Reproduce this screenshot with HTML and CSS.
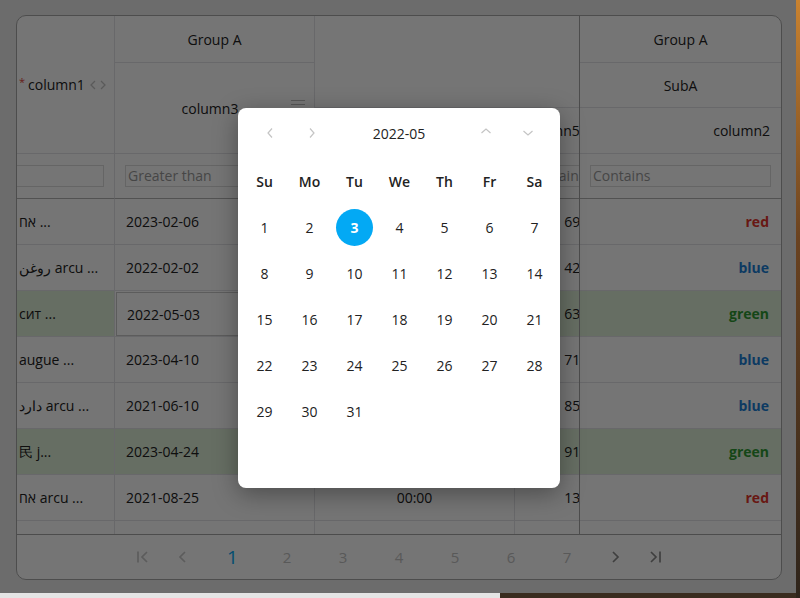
FILE: index.html
```html
<!DOCTYPE html>
<html lang="en">
<head>
<meta charset="utf-8">
<title>Grid with date picker</title>
<link rel="stylesheet" href="styles.css">
</head>
<body>
<div class="screen">
  <div class="grid">
    <div class="grid-body">
      <div class="scroller">
        <div class="sc-inner">
          <div class="head">
            <div class="c h h-col1"><span class="req">*</span>column1
              <svg class="sort" width="18" height="10" viewBox="0 0 18 10"><path d="M6 1 L2 5 L6 9 M12 1 L16 5 L12 9" fill="none" stroke="#c4c4c4" stroke-width="1.3"/></svg>
            </div>
            <div class="c h h-grp">Group A</div>
            <div class="c h h-empty"></div>
            <div class="c h h-col3"><span></span><span>column3</span>
              <svg class="menu" width="14" height="12" viewBox="0 0 14 12"><path d="M0 1.5 H14 M0 5.5 H14 M0 9.5 H14" stroke="#bdbdbd" stroke-width="1.2"/></svg>
            </div>
            <div class="c h h-col4">column4</div>
            <div class="c h h-col5">column5</div>
            <div class="c f f-right"><span class="inp"></span></div>
            <div class="c f"><span class="inp">Greater than</span></div>
            <div class="c f"><span class="inp">Equals</span></div>
            <div class="c f"><span class="inp">Contains</span></div>
          </div>

          <div class="row"><div class="c t">אח ...</div><div class="c d">2023-02-06</div><div class="c m">08:15</div><div class="c n">69143.27</div></div>
          <div class="row"><div class="c t">روغن arcu ...</div><div class="c d">2022-02-02</div><div class="c m">12:40</div><div class="c n">42718.05</div></div>
          <div class="row ok"><div class="c t">сит ...</div><div class="c d edit"><span class="ed">2022-05-03</span></div><div class="c m">17:05</div><div class="c n">63209.84</div></div>
          <div class="row"><div class="c t">augue ...</div><div class="c d">2023-04-10</div><div class="c m">09:30</div><div class="c n">71158.36</div></div>
          <div class="row"><div class="c t">دارد arcu ...</div><div class="c d">2021-06-10</div><div class="c m">14:55</div><div class="c n">85970.12</div></div>
          <div class="row ok"><div class="c t">民 j...</div><div class="c d">2023-04-24</div><div class="c m">21:20</div><div class="c n">91436.58</div></div>
          <div class="row"><div class="c t">אח arcu ...</div><div class="c d">2021-08-25</div><div class="c m">00:00</div><div class="c n">13702.66</div></div>
          <div class="row"><div class="c t">ipsum ...</div><div class="c d">2022-11-17</div><div class="c m">06:45</div><div class="c n">25081.93</div></div>
        </div>
      </div>
      <div class="frozen">
        <div class="head-f">
          <div class="c h">Group A</div>
          <div class="c h">SubA</div>
          <div class="c h h-right">column2</div>
          <div class="c f"><span class="inp wide">Contains</span></div>
        </div>
        <div class="row-f"><div class="c v red">red</div></div>
        <div class="row-f"><div class="c v blue">blue</div></div>
        <div class="row-f ok"><div class="c v green">green</div></div>
        <div class="row-f"><div class="c v blue">blue</div></div>
        <div class="row-f"><div class="c v blue">blue</div></div>
        <div class="row-f ok"><div class="c v green">green</div></div>
        <div class="row-f"><div class="c v red">red</div></div>
        <div class="row-f"><div class="c v blue">blue</div></div>
      </div>
    </div>
    <div class="pager">
      <span class="pg arrow"><svg width="16" height="14" viewBox="0 0 16 14"><path d="M3 1.5 V12.5 M12 2 L7 7 L12 12" fill="none" stroke="#c9c9c9" stroke-width="1.7"/></svg></span>
      <span class="pg arrow"><svg width="16" height="14" viewBox="0 0 16 14"><path d="M10 2 L5 7 L10 12" fill="none" stroke="#c9c9c9" stroke-width="1.7"/></svg></span>
      <span class="pg num active">1</span>
      <span class="pg num">2</span>
      <span class="pg num">3</span>
      <span class="pg num">4</span>
      <span class="pg num">5</span>
      <span class="pg num">6</span>
      <span class="pg num">7</span>
      <span class="pg arrow"><svg width="16" height="14" viewBox="0 0 16 14"><path d="M6 2 L11 7 L6 12" fill="none" stroke="#8a8a8a" stroke-width="1.7"/></svg></span>
      <span class="pg arrow"><svg width="16" height="14" viewBox="0 0 16 14"><path d="M4 2 L9 7 L4 12 M13 1.5 V12.5" fill="none" stroke="#8a8a8a" stroke-width="1.7"/></svg></span>
    </div>
  </div>

  <div class="backdrop"></div>

  <div class="picker">
    <div class="p-head">
      <span class="p-btn"><svg width="10" height="12" viewBox="0 0 10 12"><path d="M7 1.5 L3 6 L7 10.5" fill="none" stroke="#c4c4c4" stroke-width="1.2"/></svg></span>
      <span class="p-btn"><svg width="10" height="12" viewBox="0 0 10 12"><path d="M3 1.5 L7 6 L3 10.5" fill="none" stroke="#c4c4c4" stroke-width="1.2"/></svg></span>
      <span class="p-title">2022-05</span>
      <span class="p-btn up"><svg width="12" height="10" viewBox="0 0 12 10"><path d="M1.5 7 L6 3 L10.5 7" fill="none" stroke="#c4c4c4" stroke-width="1.2"/></svg></span>
      <span class="p-btn"><svg width="12" height="10" viewBox="0 0 12 10"><path d="M1.5 3 L6 7 L10.5 3" fill="none" stroke="#c4c4c4" stroke-width="1.2"/></svg></span>
    </div>
    <div class="p-grid">
      <span class="wd">Su</span><span class="wd">Mo</span><span class="wd">Tu</span><span class="wd">We</span><span class="wd">Th</span><span class="wd">Fr</span><span class="wd">Sa</span>
      <span class="day">1</span><span class="day">2</span><span class="day"><b class="sel">3</b></span><span class="day">4</span><span class="day">5</span><span class="day">6</span><span class="day">7</span>
      <span class="day">8</span><span class="day">9</span><span class="day">10</span><span class="day">11</span><span class="day">12</span><span class="day">13</span><span class="day">14</span>
      <span class="day">15</span><span class="day">16</span><span class="day">17</span><span class="day">18</span><span class="day">19</span><span class="day">20</span><span class="day">21</span>
      <span class="day">22</span><span class="day">23</span><span class="day">24</span><span class="day">25</span><span class="day">26</span><span class="day">27</span><span class="day">28</span>
      <span class="day">29</span><span class="day">30</span><span class="day">31</span><span class="day"></span><span class="day"></span><span class="day"></span><span class="day"></span>
      <span class="day"></span><span class="day"></span><span class="day"></span><span class="day"></span><span class="day"></span><span class="day"></span><span class="day"></span>
    </div>
  </div>
</div>
</body>
</html>
```

FILE: styles.css
```css
html {
  background:
    linear-gradient(180deg, #c9822f 0%, #6a4220 40%, #2e241b 100%) right top / 4px 100% no-repeat,
    linear-gradient(90deg, #e4e4e4 0 500px, #3a2c1f 500px) left bottom / 100% 100% no-repeat;
  height: 100%;
}

body {
  margin: 0;
  font-family: "Open Sans", "Liberation Sans", sans-serif;
}

.screen {
  position: relative;
  width: 796px;
  height: 593px;
  box-sizing: border-box;
  padding: 15px 14px 13px 16px;
  background: #ececec;
}

.grid {
  height: 100%;
  box-sizing: border-box;
  display: flex;
  flex-direction: column;
  border: 1px solid #a9a9a9;
  border-radius: 10px;
  overflow: hidden;
  background: #fff;
  color: #212121;
  font-size: 14px;
}

.grid-body {
  flex: 1;
  min-height: 0;
  display: flex;
  overflow: hidden;
}

.scroller {
  flex: 1;
  min-width: 0;
  overflow: hidden;
}

.sc-inner {
  width: 650px;
  margin-left: -32px;
}

.head,
.row {
  display: grid;
  grid-template-columns: 130px 200px 200px 120px;
}

.head {
  grid-template-rows: 47px 45px 46px 45px;
}

.row { height: 46px; }

.c {
  box-sizing: border-box;
  display: flex;
  align-items: center;
  min-width: 0;
  overflow: hidden;
  white-space: nowrap;
  border-right: 1px solid #e2e2e6;
  border-bottom: 1px solid #e2e2e6;
}

.h {
  justify-content: center;
  font-weight: 500;
  color: #222;
}

.h-col1 {
  grid-row: 1 / 4;
  grid-column: 1;
  justify-content: flex-start;
  padding-left: 34px;
}

.req {
  color: #e0463c;
  font-size: 11px;
  margin-right: 3px;
  align-self: center;
  transform: translateY(-3px);
}

.sort { margin-left: 4px; }

.h-grp { grid-row: 1; grid-column: 2; }
.h-empty { grid-row: 1 / 3; grid-column: 3 / 5; }

.h-col3 {
  grid-row: 2 / 4;
  grid-column: 2;
  display: grid;
  grid-template-columns: 1fr auto 1fr;
  align-items: center;
  padding: 0 9px 0 0;
}

.h-col3 .menu { justify-self: end; margin-top: -6px; }

.h-col4 { grid-row: 3; grid-column: 3; }

.h-col5 {
  grid-row: 3;
  grid-column: 4;
  justify-content: flex-start;
  padding-left: 8px;
  font-weight: 400;
}

.f {
  border-bottom: 1px solid #b4b4b4;
  padding: 0 10px;
}

.f-right { justify-content: flex-end; }

.inp {
  box-sizing: border-box;
  display: block;
  height: 22px;
  width: 100%;
  border: 1px solid #dcdcdc;
  padding: 0 2px;
  line-height: 20px;
  color: #9a9a9a;
  font-size: 14px;
}

.f-right .inp { width: 104px; flex: none; }

.t { padding-left: 34px; }
.d { padding-left: 11px; }
.m { justify-content: center; }
.n { justify-content: flex-end; padding-right: 10px; }

.edit {
  padding: 1px 0 0 1px;
}

.ed {
  box-sizing: border-box;
  display: flex;
  align-items: center;
  width: 100%;
  height: 100%;
  padding-left: 10px;
  border: 1px solid #c9c9c9;
  background: #fff;
}

.ok .c { background: #dff0d8; }
.ok .edit { background: #fff; }

.frozen {
  flex: none;
  width: 201px;
  border-left: 1px solid #a5a5a5;
  overflow: hidden;
}

.head-f {
  display: grid;
  grid-template-rows: 47px 45px 46px 45px;
}

.head-f .c,
.row-f .c { border-right: 0; }

.h-right {
  justify-content: flex-end;
  padding-right: 11px;
  font-weight: 400;
}

.row-f { height: 46px; display: flex; }
.row-f .c { width: 100%; }

.v {
  justify-content: flex-end;
  padding-right: 12px;
  font-weight: 700;
}

.red { color: #e2352b; }
.blue { color: #1c7fd6; }
.green { color: #2f9a34; }

.pager {
  flex: none;
  height: 45px;
  box-sizing: border-box;
  border-top: 1px solid #a5a5a5;
  display: flex;
  justify-content: center;
  align-items: center;
}

.pg {
  display: flex;
  justify-content: center;
  align-items: center;
  height: 100%;
}

.arrow { width: 40px; }

.num {
  width: 56px;
  font-size: 15px;
  color: #c2c2c2;
}

.num.active {
  color: #03a9f4;
  font-size: 19px;
  padding-left: 3px;
  box-sizing: border-box;
}

.backdrop {
  position: absolute;
  inset: 0;
  background: rgba(0, 0, 0, 0.54);
}

.picker {
  position: absolute;
  left: 238px;
  top: 108px;
  width: 322px;
  height: 380px;
  box-sizing: border-box;
  padding: 0 3px 8px 4px;
  background: #fff;
  border-radius: 8px;
  box-shadow: 0 6px 24px rgba(0, 0, 0, 0.35);
  color: #222;
  font-size: 14px;
}

.p-head {
  height: 50px;
  display: flex;
  align-items: center;
  padding: 0 8px 0 7px;
}

.p-btn {
  width: 42px;
  height: 100%;
  display: flex;
  justify-content: center;
  align-items: center;
}

.p-btn.up { padding-bottom: 4px; box-sizing: border-box; }

.p-title {
  flex: 1;
  text-align: center;
}

.p-grid {
  display: grid;
  grid-template-columns: repeat(7, 45px);
  grid-auto-rows: 46px;
}

.wd,
.day {
  display: flex;
  justify-content: center;
  align-items: center;
}

.wd { font-weight: 600; }

.sel {
  width: 37px;
  height: 37px;
  border-radius: 50%;
  background: #03a9f4;
  color: #fff;
  font-weight: 700;
  display: flex;
  justify-content: center;
  align-items: center;
}
```
